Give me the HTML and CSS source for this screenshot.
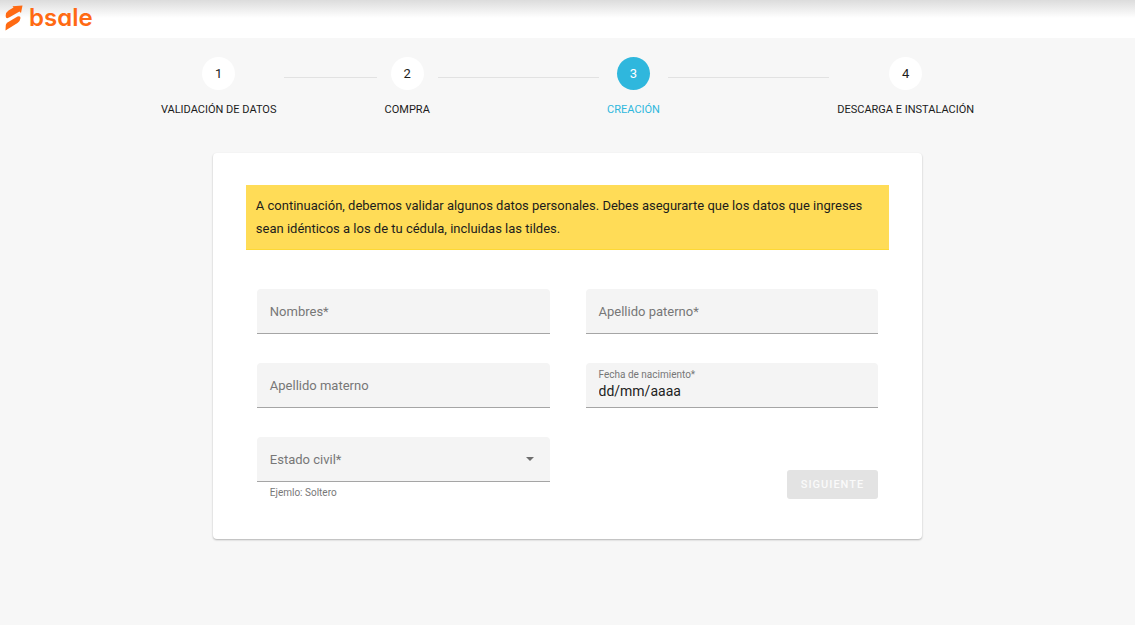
FILE: index.html
```html
<!DOCTYPE html>
<html lang="es">
<head>
<meta charset="utf-8">
<meta name="viewport" content="width=device-width, initial-scale=1">
<title>bsale - Creación</title>
<link rel="stylesheet" href="styles.css">
</head>
<body>
<header class="topbar">
  <a class="brand" href="#">
    <svg class="brand-mark" viewBox="0 0 18 26" aria-hidden="true">
      <path d="M1 12.500Q-.2 8 3.500 5.500L8.500 2.500L7.500 1.200L17.500 .5L16 8L14.500 6.500L5 12Q2 14 1 12.500Z"/>
      <path d="M.5 25.500L.8 20Q1 18.500 2.500 17.500L12.500 11.500Q15.500 10.500 15.500 13Q15.300 16 12.500 18Z"/>
    </svg>
    <span class="brand-name">bsale</span>
  </a>
</header>
<main class="page">
  <ol class="stepper">
    <li class="step"><span class="step-number">1</span><span class="step-label">VALIDACIÓN DE DATOS</span></li>
    <li class="step-line step-line-short" aria-hidden="true"></li>
    <li class="step"><span class="step-number">2</span><span class="step-label">COMPRA</span></li>
    <li class="step-line" aria-hidden="true"></li>
    <li class="step step-active" aria-current="step"><span class="step-number">3</span><span class="step-label">CREACIÓN</span></li>
    <li class="step-line" aria-hidden="true"></li>
    <li class="step"><span class="step-number">4</span><span class="step-label">DESCARGA E INSTALACIÓN</span></li>
  </ol>
  <section class="card">
    <p class="notice">A continuación, debemos validar algunos datos personales. Debes asegurarte que los datos que ingreses sean idénticos a los de tu cédula, incluidas las tildes.</p>
    <form class="form">
      <div class="field">
        <label class="field-label" for="nombres">Nombres*</label>
        <input class="field-control" id="nombres" type="text">
      </div>
      <div class="field">
        <label class="field-label" for="paterno">Apellido paterno*</label>
        <input class="field-control" id="paterno" type="text">
      </div>
      <div class="field">
        <label class="field-label" for="materno">Apellido materno</label>
        <input class="field-control" id="materno" type="text">
      </div>
      <div class="field field-filled">
        <label class="field-label" for="fecha">Fecha de nacimiento*</label>
        <input class="field-control" id="fecha" type="text" placeholder="dd/mm/aaaa">
      </div>
      <div class="field-group">
        <div class="field">
          <label class="field-label" for="estado">Estado civil*</label>
          <select class="field-control" id="estado" aria-describedby="estado-ayuda">
            <option value=""></option>
          </select>
          <svg class="field-arrow" viewBox="0 0 8 4" aria-hidden="true"><path d="M0 0H8L4 4Z"/></svg>
        </div>
        <p class="field-hint" id="estado-ayuda">Ejemlo: Soltero</p>
      </div>
      <div class="actions">
        <button class="button" type="submit" disabled>SIGUIENTE</button>
      </div>
    </form>
  </section>
</main>
</body>
</html>
```

FILE: styles.css
```css
* {
  box-sizing: border-box;
}

body {
  margin: 0;
  min-height: 100vh;
  background: #f7f7f7;
  color: #1c1c1c;
  font-family: Roboto, sans-serif;
  font-size: 13px;
}

.topbar {
  height: 38px;
  padding: 4px 5px;
  background: linear-gradient(#dcdcdc, #fff 18px);
}

.brand {
  display: inline-flex;
  align-items: center;
  gap: 6px;
  color: #ff6a13;
  text-decoration: none;
}

.brand-mark {
  width: 18px;
  height: 26px;
  fill: currentColor;
}

.brand-name {
  font-family: Inter, sans-serif;
  font-size: 24px;
  font-weight: 600;
  line-height: 28px;
  font-feature-settings: "cv11";
}

.page {
  display: flex;
  flex-direction: column;
  align-items: center;
  gap: 36px;
  padding: 19px 0 32px;
}

.stepper {
  display: flex;
  gap: 6px;
  width: 72%;
  margin: 0;
  padding: 0;
  list-style: none;
}

.step {
  display: flex;
  flex-direction: column;
  align-items: center;
  gap: 13px;
}

.step-number {
  display: grid;
  place-items: center;
  width: 33px;
  height: 33px;
  border-radius: 50%;
  background: #fff;
}

.step-label {
  padding: 0 2px;
  font-size: 11px;
  line-height: 14px;
  white-space: nowrap;
}

.step-active {
  color: #2fb7dd;
}

.step-active .step-number {
  background: #2fb7dd;
  color: #fff;
}

.step-line {
  flex: 7;
  height: 1px;
  margin-top: 20px;
  background: #e2e2e2;
}

.step-line-short {
  flex: 4;
}

.card {
  width: 62.5%;
  padding: 32px 33px 40px;
  border-radius: 4px;
  background: #fff;
  box-shadow: 0 1px 2px rgba(0, 0, 0, 0.28);
}

.notice {
  margin: 0;
  padding: 9px 10px;
  background: #ffdc57;
  border-bottom: 1px solid #fdd835;
  line-height: 23px;
}

.form {
  display: grid;
  grid-template-columns: 1fr 1fr;
  gap: 29px 36px;
  padding: 39px 11px 0;
}

.field {
  display: grid;
  height: 45px;
  border-bottom: 1px solid #a5a5a5;
  border-radius: 4px 4px 0 0;
  background: #f4f4f4;
}

.field-label,
.field-control,
.field-arrow {
  grid-area: 1 / 1;
}

.field-label {
  align-self: center;
  z-index: 1;
  padding-left: 13px;
  color: #777;
  pointer-events: none;
}

.field-control {
  width: 100%;
  min-width: 0;
  padding: 0 13px;
  border: 0;
  background: transparent;
  color: #222;
  font: inherit;
  appearance: none;
}

.field-filled .field-label {
  align-self: start;
  padding-top: 6px;
  font-size: 10px;
  line-height: 12px;
}

.field-filled .field-control {
  padding-top: 12px;
  font-size: 14px;
}

.field-control::placeholder {
  color: #222;
  opacity: 1;
}

.field-arrow {
  align-self: center;
  justify-self: end;
  width: 8px;
  height: 4px;
  margin-right: 16px;
  fill: #6e6e6e;
  pointer-events: none;
}

.field-hint {
  margin: 0;
  padding: 5px 13px 0;
  color: #777;
  font-size: 10px;
  line-height: 12px;
}

.actions {
  display: flex;
  align-items: flex-end;
  justify-content: flex-end;
}

.button {
  height: 29px;
  padding: 0 14px;
  border: 0;
  border-radius: 3px;
  background: #e3e3e3;
  color: #fafafa;
  font: 500 11px Roboto, sans-serif;
  letter-spacing: 1px;
}
```
